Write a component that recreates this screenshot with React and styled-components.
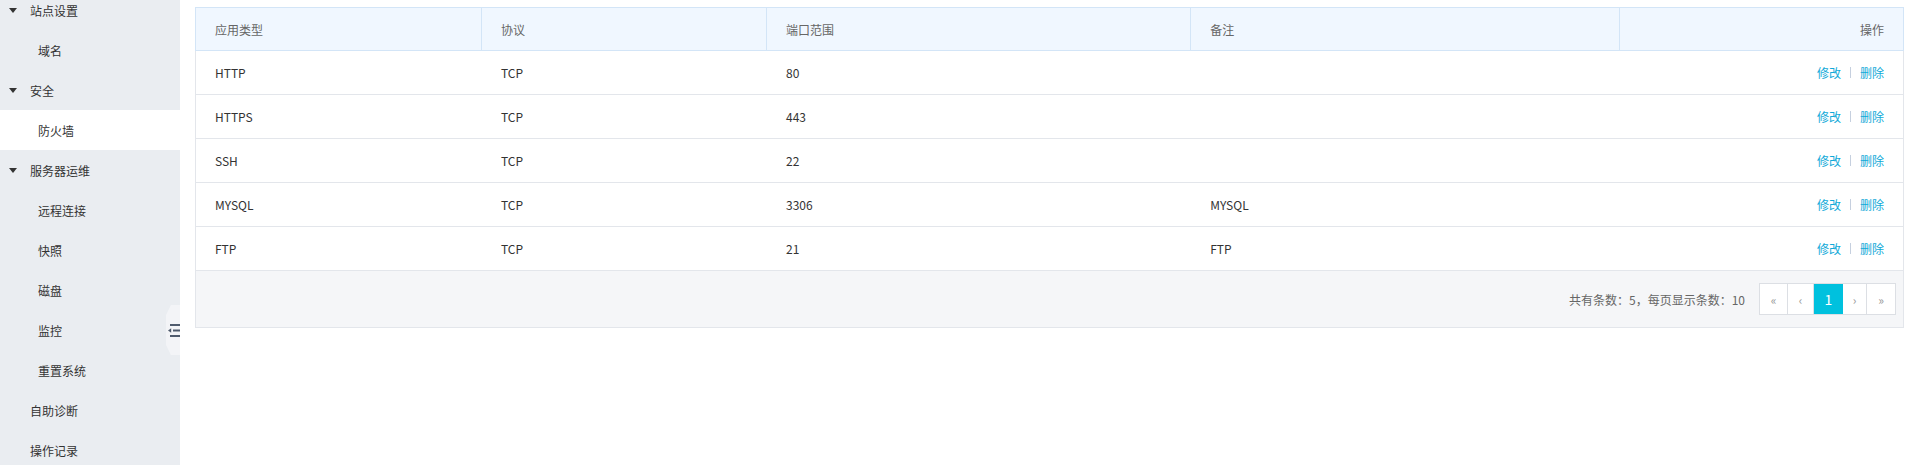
import React from 'react'
import styled, { createGlobalStyle } from 'styled-components'

const GlobalStyle = createGlobalStyle`
  html, body {
    margin: 0;
    padding: 0;
    background: #fff;
    font-family: "Noto Sans CJK SC", "Noto Sans", sans-serif;
    font-size: 12px;
    color: #333;
  }
  * { box-sizing: border-box; }
`

const menu = [
  { label: '站点设置', group: true },
  { label: '域名', sub: true },
  { label: '安全', group: true },
  { label: '防火墙', sub: true, active: true },
  { label: '服务器运维', group: true },
  { label: '远程连接', sub: true },
  { label: '快照', sub: true },
  { label: '磁盘', sub: true },
  { label: '监控', sub: true },
  { label: '重置系统', sub: true },
  { label: '自助诊断' },
  { label: '操作记录' },
]

const rules = [
  { app: 'HTTP', proto: 'TCP', port: '80', note: '' },
  { app: 'HTTPS', proto: 'TCP', port: '443', note: '' },
  { app: 'SSH', proto: 'TCP', port: '22', note: '' },
  { app: 'MYSQL', proto: 'TCP', port: '3306', note: 'MYSQL' },
  { app: 'FTP', proto: 'TCP', port: '21', note: 'FTP' },
]

// column widths, shared by header and body
const cols = ['16.75%', '16.7%', '24.85%', '25.1%', '16.6%']

const Caret = () => (
  <svg width="8" height="5" viewBox="0 0 8 5">
    <path d="M0 0 L8 0 L4 5 Z" fill="#333" />
  </svg>
)

const ToggleIcon = () => (
  <svg width="14" height="13" viewBox="0 0 14 13">
    <rect x="2" y="0" width="12" height="2" fill="#4f5b6d" />
    <rect x="5" y="5.5" width="9" height="2" fill="#4f5b6d" />
    <path d="M0 6.5 L3.2 4.2 L3.2 8.8 Z" fill="#4f5b6d" />
    <rect x="2" y="11" width="12" height="2" fill="#4f5b6d" />
  </svg>
)

export default function App() {
  return (
    <>
      <GlobalStyle />
      <Page>
        <Sidebar>
          <MenuList>
            {menu.map((m) => (
              <MenuItem key={m.label} sub={m.sub} active={m.active}>
                {m.group && (
                  <CaretBox>
                    <Caret />
                  </CaretBox>
                )}
                {m.label}
              </MenuItem>
            ))}
          </MenuList>
          <Handle>
            <ToggleIcon />
          </Handle>
        </Sidebar>
        <Main>
          <Table>
            <HeadRow>
              <HeadCell w={cols[0]}>应用类型</HeadCell>
              <HeadCell w={cols[1]}>协议</HeadCell>
              <HeadCell w={cols[2]}>端口范围</HeadCell>
              <HeadCell w={cols[3]}>备注</HeadCell>
              <HeadCell w={cols[4]} right last>操作</HeadCell>
            </HeadRow>
            {rules.map((r) => (
              <Row key={r.app}>
                <Cell w={cols[0]}>{r.app}</Cell>
                <Cell w={cols[1]}>{r.proto}</Cell>
                <Cell w={cols[2]}>{r.port}</Cell>
                <Cell w={cols[3]}>{r.note}</Cell>
                <Cell w={cols[4]} right>
                  <Link>修改</Link>
                  <Sep />
                  <Link>删除</Link>
                </Cell>
              </Row>
            ))}
            <Footer>
              <Summary>共有条数：5，每页显示条数：10</Summary>
              <Pager>
                <PageBtn w={28}>«</PageBtn>
                <PageBtn w={26}>‹</PageBtn>
                <PageBtn w={29} active>1</PageBtn>
                <PageBtn w={24}>›</PageBtn>
                <PageBtn w={28} last>»</PageBtn>
              </Pager>
            </Footer>
          </Table>
        </Main>
      </Page>
    </>
  )
}

const Page = styled.div`
  display: flex;
  height: 465px;
  overflow: hidden;
`

const Sidebar = styled.aside`
  position: relative;
  width: 180px;
  flex-shrink: 0;
  background: #eaedf1;
`

const MenuList = styled.ul`
  list-style: none;
  margin: -10px 0 0;
  padding: 0;
`

const MenuItem = styled.li`
  display: flex;
  align-items: center;
  height: 40px;
  padding-left: ${(p) => (p.sub ? '38px' : '30px')};
  position: relative;
  background: ${(p) => (p.active ? '#fff' : 'transparent')};
  color: #333;
  font-size: 12px;
`

const CaretBox = styled.span`
  position: absolute;
  left: 9px;
  top: 18px;
  display: flex;
`

const Handle = styled.div`
  position: absolute;
  right: 0;
  top: 305px;
  width: 14px;
  height: 50px;
  background: #f3f4f7;
  clip-path: polygon(35% 0, 100% 0, 100% 100%, 35% 100%, 0 80%, 0 20%);
  display: flex;
  align-items: center;
  justify-content: flex-end;
  overflow: hidden;
  & svg {
    margin-right: -2px;
  }
`

const Main = styled.main`
  flex: 1;
  padding: 7px 16px 0 15px;
`

const Table = styled.div`
  border: 1px solid #e3e6eb;
`

const HeadRow = styled.div`
  display: flex;
  height: 44px;
  background: #f0f7ff;
  border: 1px solid #d3e5f7;
  margin: -1px -1px 0;
`

const HeadCell = styled.div`
  width: ${(p) => p.w};
  display: flex;
  align-items: center;
  justify-content: ${(p) => (p.right ? 'flex-end' : 'flex-start')};
  padding: 0 19px;
  color: #666;
  border-right: ${(p) => (p.last ? 'none' : '1px solid #d3e5f7')};
`

const Row = styled.div`
  display: flex;
  height: 44px;
  border-bottom: 1px solid #e3e6eb;
  background: #fff;
`

const Cell = styled.div`
  width: ${(p) => p.w};
  display: flex;
  align-items: center;
  justify-content: ${(p) => (p.right ? 'flex-end' : 'flex-start')};
  padding: 0 19px;
  color: #333;
`

const Link = styled.a`
  color: #10a9d8;
  cursor: pointer;
`

const Sep = styled.span`
  width: 1px;
  height: 11px;
  background: #c6d0df;
  margin: 0 9px;
`

const Footer = styled.div`
  display: flex;
  align-items: center;
  justify-content: flex-end;
  height: 56px;
  padding-right: 7px;
  background: #f5f6f8;
`

const Summary = styled.span`
  color: #666;
  margin-right: 14px;
`

const Pager = styled.div`
  display: flex;
  height: 32px;
  border: 1px solid #dcdfe4;
`

const PageBtn = styled.span`
  width: ${(p) => p.w}px;
  display: flex;
  align-items: center;
  justify-content: center;
  background: ${(p) => (p.active ? '#00c1de' : '#fff')};
  color: ${(p) => (p.active ? '#fff' : '#999')};
  font-size: ${(p) => (p.active ? '14px' : '12px')};
  border-right: ${(p) => (p.last || p.active ? 'none' : '1px solid #dcdfe4')};
`
